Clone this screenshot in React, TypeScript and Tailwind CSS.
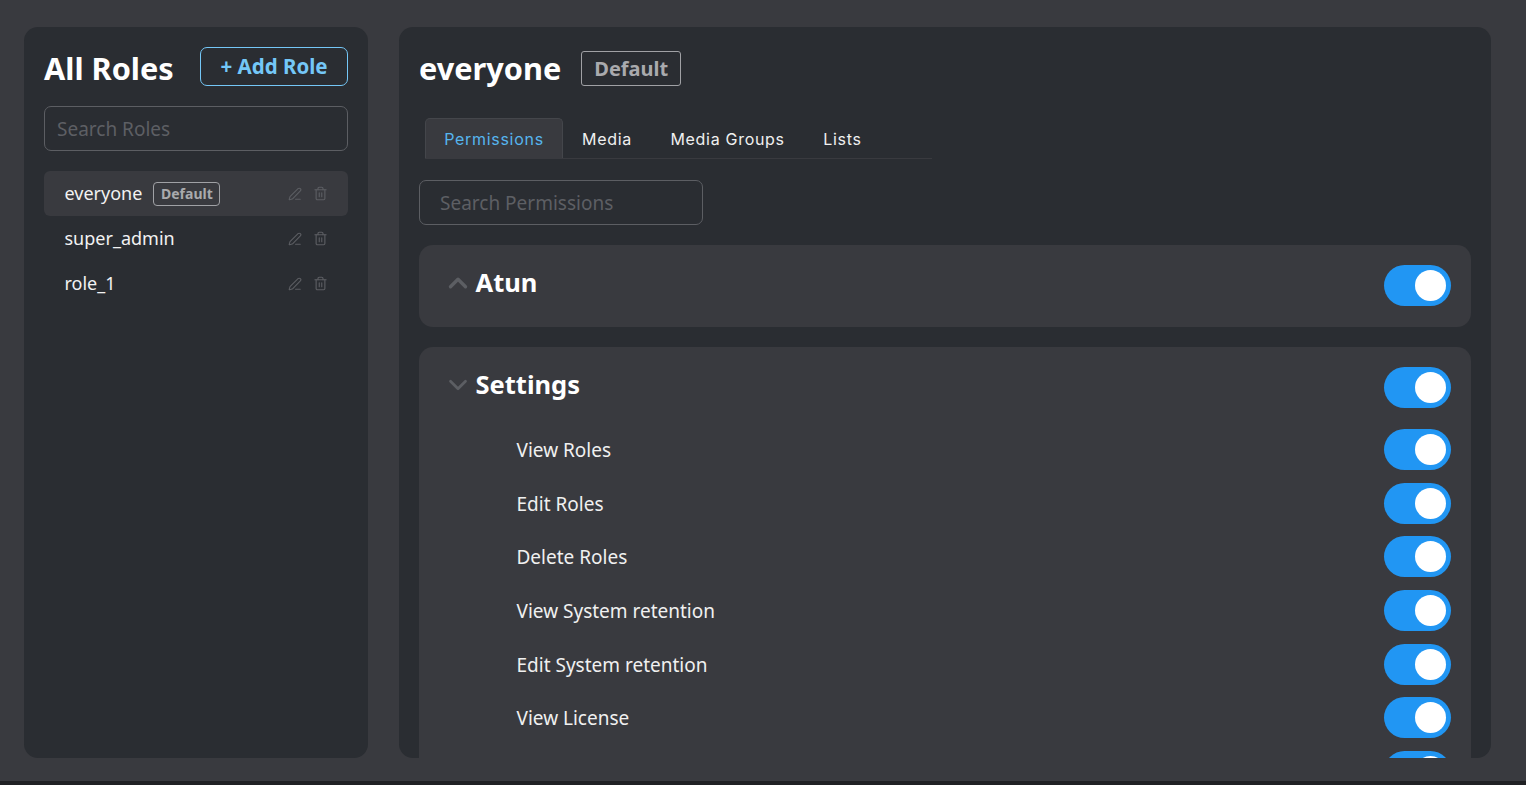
import { ChevronDown, ChevronUp, PenLine, Trash2 } from "lucide-react";

const roles = [
  { name: "everyone", isDefault: true },
  { name: "super_admin", isDefault: false },
  { name: "role_1", isDefault: false },
];

const tabs = ["Media", "Media Groups", "Lists"];

// last row only peeks out at the bottom of the panel, its label is never visible
const settingsPermissions = [
  "View Roles",
  "Edit Roles",
  "Delete Roles",
  "View System retention",
  "Edit System retention",
  "View License",
  "",
];

function Toggle() {
  return (
    <div className="flex h-[41px] w-[67px] shrink-0 items-center justify-end rounded-full bg-[#2196f3] pr-[5px]">
      <div className="h-[31px] w-[31px] rounded-full bg-white" />
    </div>
  );
}

export default function App() {
  return (
    <div className="flex h-[785px] w-[1526px] flex-col overflow-hidden bg-[#393a3f] font-['Noto_Sans',sans-serif] text-white">
      <div className="flex h-[781px] shrink-0 gap-[31px] pb-[23px] pl-[24px] pr-[35px] pt-[27px]">
        <aside className="flex w-[344px] shrink-0 flex-col rounded-[14px] bg-[#2a2d32] px-[20px] pt-[20px]">
          <div className="flex h-[39px] items-center justify-between">
            <h2 className="mt-[3px] text-[30.7px] font-bold leading-[40px]">All Roles</h2>
            <button
              type="button"
              className="flex h-[39px] w-[148px] items-center justify-center rounded-[7px] border border-[#74c7f7] text-[20.5px] font-bold leading-none text-[#74c7f7]"
            >
              + Add Role
            </button>
          </div>

          <div className="mt-[20px] flex h-[45px] items-center rounded-[7px] border border-[#5c5e63] px-[12px] pt-[2px] text-[19px] text-[#5d5f64]">
            Search Roles
          </div>

          <ul className="mt-[20px]">
            {roles.map((role) => (
              <li
                key={role.name}
                className={`flex h-[45px] items-center rounded-[6px] pl-[20.5px] pr-[20px] ${
                  role.isDefault ? "bg-[#393a3f]" : ""
                }`}
              >
                <span className="mb-[2px] text-[18px] leading-none text-[#f2f2f2]">{role.name}</span>
                {role.isDefault ? (
                  <span className="ml-[11px] flex h-[24px] w-[67px] items-center justify-center rounded-[4px] border border-[#a0a1a5] text-[14px] font-bold leading-none text-[#a9aaad]">
                    Default
                  </span>
                ) : null}
                <span className="ml-auto flex items-center gap-[11px] text-[#5c5e63]">
                  <PenLine className="h-[14px] w-[14px]" strokeWidth={1.8} />
                  <Trash2 className="h-[15px] w-[15px]" strokeWidth={1.8} />
                </span>
              </li>
            ))}
          </ul>
        </aside>

        <main className="min-w-0 flex-1 overflow-hidden rounded-[14px] bg-[#2a2d32] px-[20px] pt-[24px]">
          <div className="flex h-[35px] items-center">
            <h1 className="mb-[2px] text-[30.7px] font-bold leading-[40px]">everyone</h1>
            <span className="ml-[20px] flex h-[35px] w-[100px] items-center justify-center rounded-[3px] border border-[#a0a1a5] text-[20px] font-bold leading-none text-[#a9aaad]">
              Default
            </span>
          </div>

          <div className="ml-[6px] mt-[33px] flex h-[40px] w-[507px] items-end border-b border-[#393a3f]">
            <div className="flex h-[40px] w-[138px] items-center justify-center rounded-t-[5px] border border-b-0 border-[#44464b] bg-[#393a3f] pt-[1px] font-['Inter',sans-serif] text-[16px] tracking-[0.7px] text-[#56b5ee]">
              Permissions
            </div>
            <div className="flex h-[40px] items-center gap-[38.5px] pl-[19px] pt-[1px] font-['Inter',sans-serif] text-[16px] tracking-[0.7px] text-[#f0f0f0]">
              {tabs.map((tab) => (
                <span key={tab}>{tab}</span>
              ))}
            </div>
          </div>

          <div className="mt-[21px] flex h-[45px] w-[284px] items-center rounded-[7px] border border-[#5c5e63] px-[20px] pt-[2px] text-[19px] text-[#5d5f64]">
            Search Permissions
          </div>

          <section className="mt-[20px] flex h-[82px] items-center justify-between rounded-[14px] bg-[#393a3f] pb-[1px] pl-[23.5px] pr-[20px]">
            <div className="mb-[6px] flex items-center gap-[3px]">
              <ChevronUp className="h-[30px] w-[30px] text-[#5c5e63]" strokeWidth={2.7} />
              <h3 className="text-[25.5px] font-bold leading-none">Atun</h3>
            </div>
            <Toggle />
          </section>

          <section className="mt-[20px] rounded-[14px] bg-[#393a3f] pl-[23.5px] pr-[20px] pt-[20px]">
            <div className="flex h-[41px] items-center justify-between">
              <div className="mb-[6px] flex items-center gap-[3px]">
                <ChevronDown className="h-[30px] w-[30px] text-[#5c5e63]" strokeWidth={2.2} />
                <h3 className="text-[25.5px] font-bold leading-none">Settings</h3>
              </div>
              <Toggle />
            </div>
            <div className="mt-[21px] flex flex-col gap-[12.7px] pb-[20px]">
              {settingsPermissions.map((permission, i) => (
                <div key={i} className="flex h-[41px] items-center justify-between pl-[74px]">
                  <span className="pt-[2px] text-[19px] leading-none text-[#f0f0f0]">{permission}</span>
                  <Toggle />
                </div>
              ))}
            </div>
          </section>
        </main>
      </div>
      <div className="flex-1 bg-[#202124]" />
    </div>
  );
}
